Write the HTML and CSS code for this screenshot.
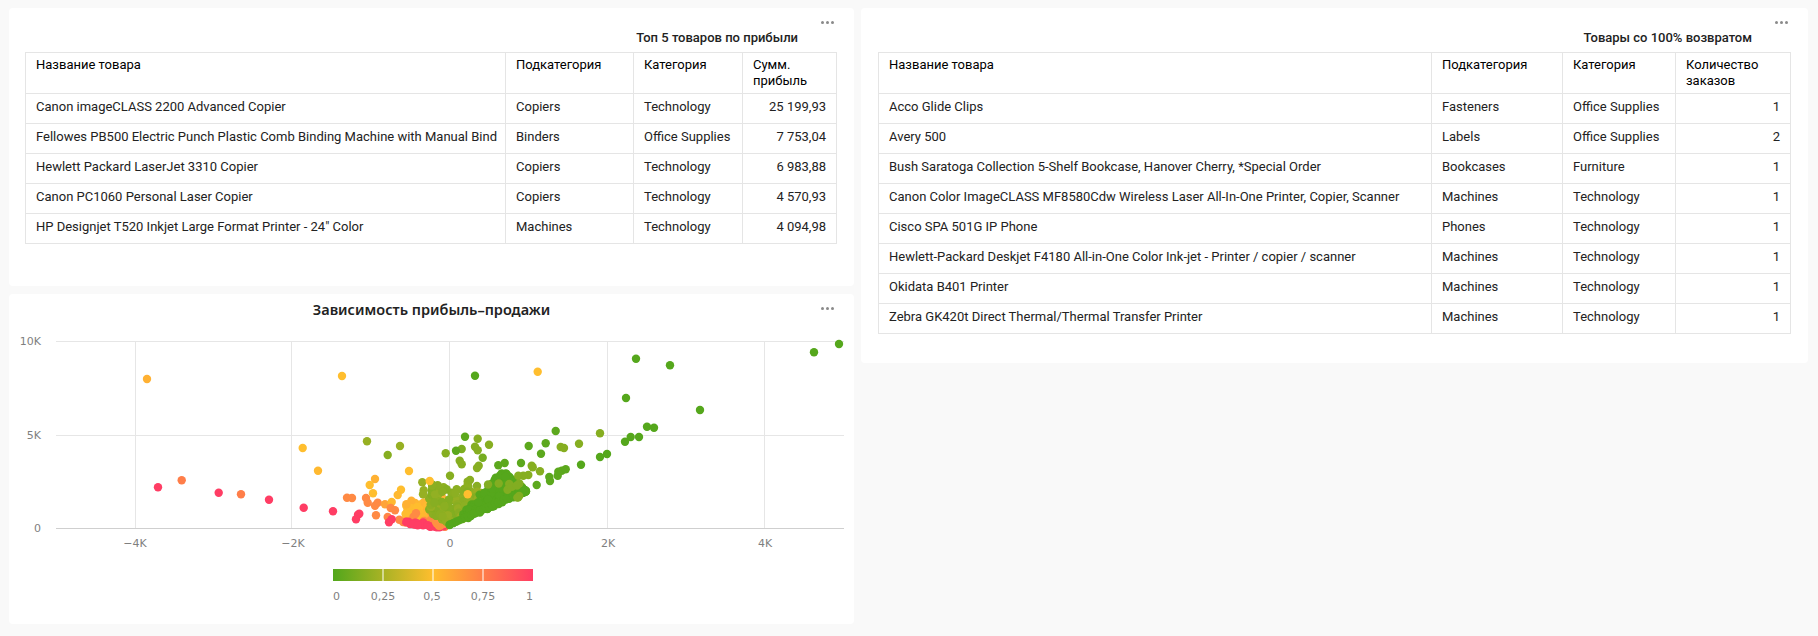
FILE: index.html
```html
<!DOCTYPE html>
<html lang="ru">
<head>
    <meta charset="UTF-8">
    <title>Dashboard</title>
    <link rel="stylesheet" href="styles.css">
</head>
<body>
    <main class="dashboard">
        <div class="column column-left">
            <section class="panel panel-top">
                <div class="menu"><i></i><i></i><i></i></div>
                <h2 class="table-title">Топ 5 товаров по прибыли</h2>
                <table class="data-table table-profit">
                    <colgroup><col class="c1"><col class="c2"><col class="c3"><col class="c4"></colgroup>
                    <thead>
                        <tr><th>Название товара</th><th>Подкатегория</th><th>Категория</th><th>Сумм. прибыль</th></tr>
                    </thead>
                    <tbody>
                        <tr><td>Canon imageCLASS 2200 Advanced Copier</td><td>Copiers</td><td>Technology</td><td class="num">25 199,93</td></tr>
                        <tr><td>Fellowes PB500 Electric Punch Plastic Comb Binding Machine with Manual Bind</td><td>Binders</td><td>Office Supplies</td><td class="num">7 753,04</td></tr>
                        <tr><td>Hewlett Packard LaserJet 3310 Copier</td><td>Copiers</td><td>Technology</td><td class="num">6 983,88</td></tr>
                        <tr><td>Canon PC1060 Personal Laser Copier</td><td>Copiers</td><td>Technology</td><td class="num">4 570,93</td></tr>
                        <tr><td>HP Designjet T520 Inkjet Large Format Printer - 24" Color</td><td>Machines</td><td>Technology</td><td class="num">4 094,98</td></tr>
                    </tbody>
                </table>
            </section>
            <section class="panel panel-chart">
                <div class="menu"><i></i><i></i><i></i></div>
                <h2 class="chart-title">Зависимость прибыль–продажи</h2>
                <svg id="scatter" class="scatter" width="845" height="299" viewBox="0 0 845 299"></svg>
            </section>
        </div>
        <div class="column column-right">
            <section class="panel panel-returns">
                <div class="menu"><i></i><i></i><i></i></div>
                <h2 class="table-title">Товары со 100% возвратом</h2>
                <table class="data-table table-returns">
                    <colgroup><col class="c1"><col class="c2"><col class="c3"><col class="c4"></colgroup>
                    <thead>
                        <tr><th>Название товара</th><th>Подкатегория</th><th>Категория</th><th>Количество заказов</th></tr>
                    </thead>
                    <tbody>
                        <tr><td>Acco Glide Clips</td><td>Fasteners</td><td>Office Supplies</td><td class="num">1</td></tr>
                        <tr><td>Avery 500</td><td>Labels</td><td>Office Supplies</td><td class="num">2</td></tr>
                        <tr><td>Bush Saratoga Collection 5-Shelf Bookcase, Hanover Cherry, *Special Order</td><td>Bookcases</td><td>Furniture</td><td class="num">1</td></tr>
                        <tr><td>Canon Color ImageCLASS MF8580Cdw Wireless Laser All-In-One Printer, Copier, Scanner</td><td>Machines</td><td>Technology</td><td class="num">1</td></tr>
                        <tr><td>Cisco SPA 501G IP Phone</td><td>Phones</td><td>Technology</td><td class="num">1</td></tr>
                        <tr><td>Hewlett-Packard Deskjet F4180 All-in-One Color Ink-jet - Printer / copier / scanner</td><td>Machines</td><td>Technology</td><td class="num">1</td></tr>
                        <tr><td>Okidata B401 Printer</td><td>Machines</td><td>Technology</td><td class="num">1</td></tr>
                        <tr><td>Zebra GK420t Direct Thermal/Thermal Transfer Printer</td><td>Machines</td><td>Technology</td><td class="num">1</td></tr>
                    </tbody>
                </table>
            </section>
        </div>
    </main>
    <script src="chart.js"></script>
</body>
</html>
```

FILE: styles.css
```css
body {
    margin: 0;
    background-color: #f9f9f9;
    color: #222;
    font-family: Roboto, "Noto Sans", Arial, sans-serif;
    font-size: 13px;
    overflow: hidden;
}

.dashboard {
    display: flex;
    align-items: flex-start;
    gap: 7px;
    padding: 8px 10px 0 9px;
}

.column {
    display: flex;
    flex-direction: column;
    gap: 8px;
}

.column-left {
    width: 845px;
}

.column-right {
    width: 947px;
}

.panel {
    position: relative;
    box-sizing: border-box;
    background-color: #fff;
    border-radius: 4px;
}

.panel-top {
    height: 278px;
    padding: 0 17px 0 16px;
}

.panel-chart {
    height: 330px;
}

.panel-returns {
    height: 355px;
    padding: 0 17px 0 17px;
}

.menu {
    position: absolute;
    top: 13px;
    right: 20px;
    display: flex;
    gap: 2px;
}

.menu i {
    width: 3px;
    height: 3px;
    border-radius: 50%;
    background-color: #8a8a8a;
}

.table-title {
    margin: 0;
    height: 44px;
    box-sizing: border-box;
    padding: 22px 39px 0 0;
    font-size: 13px;
    line-height: 16px;
    font-weight: 500;
    text-align: right;
}

.chart-title {
    margin: 0;
    height: 31px;
    box-sizing: border-box;
    padding-top: 6px;
    font-family: "Noto Sans", Arial, sans-serif;
    font-size: 14.5px;
    line-height: 18px;
    font-weight: 600;
    text-align: center;
}

.data-table {
    width: 100%;
    table-layout: fixed;
    border-collapse: collapse;
    line-height: 16px;
}

.data-table th,
.data-table td {
    border: 1px solid #e5e5e5;
    padding: 0 10px;
    vertical-align: middle;
    overflow: hidden;
}

.data-table th {
    height: 41px;
    padding-top: 4px;
    box-sizing: border-box;
    vertical-align: top;
    font-weight: 400;
    color: #000;
    text-align: left;
}

.data-table td {
    padding-bottom: 3px;
    height: 26px;
    white-space: nowrap;
}

.data-table .num {
    text-align: right;
}

.table-profit .c1 { width: 480px; }
.table-profit .c2 { width: 128px; }
.table-profit .c3 { width: 109px; }

.table-returns .c1 { width: 553px; }
.table-returns .c2 { width: 131px; }
.table-returns .c3 { width: 113px; }

.scatter {
    display: block;
}

.scatter text {
    font-family: "DejaVu Sans", Verdana, sans-serif;
    font-size: 11px;
    fill: #7f7f7f;
}
```

FILE: chart.js
```js
// points are written in page pixels, the svg starts at 9,325
const OFFSET_X = 9;
const OFFSET_Y = 325;
const SVG_NS = 'http://www.w3.org/2000/svg';
const svg = document.getElementById('scatter');

// value 0..1 -> legend colour
function ratioColor(r) {
    const stops = [[82, 167, 28], [255, 190, 46], [255, 61, 100]];
    const a = r < 0.5 ? stops[0] : stops[1];
    const b = r < 0.5 ? stops[1] : stops[2];
    const t = r < 0.5 ? r * 2 : (r - 0.5) * 2;
    const mix = a.map((v, i) => Math.round(v + (b[i] - v) * t));
    return 'rgb(' + mix.join(',') + ')';
}

function add(tag, attrs, text) {
    const el = document.createElementNS(SVG_NS, tag);
    for (const key in attrs) el.setAttribute(key, attrs[key]);
    if (text) el.textContent = text;
    svg.appendChild(el);
    return el;
}

function line(x1, y1, x2, y2, color) {
    add('line', {
        x1: x1 - OFFSET_X, y1: y1 - OFFSET_Y, x2: x2 - OFFSET_X, y2: y2 - OFFSET_Y,
        stroke: color, 'stroke-width': 1, 'shape-rendering': 'crispEdges'
    });
}

function label(x, y, text, anchor) {
    add('text', { x: x - OFFSET_X, y: y - OFFSET_Y, 'text-anchor': anchor }, text);
}

function dot(x, y, r) {
    add('circle', { cx: x - OFFSET_X, cy: y - OFFSET_Y, r: 4.2, fill: ratioColor(r) });
}

// grid
[341, 435].forEach(y => line(56, y, 844, y, '#e6e6e6'));
[135, 291, 449, 607, 764].forEach(x => line(x, 341, x, 528, '#e6e6e6'));
line(56, 528, 844, 528, '#cfcfcf');

[['10K', 345], ['5K', 439], ['0', 532]].forEach(t => label(41, t[1], t[0], 'end'));
[['−4K', 135], ['−2K', 293], ['0', 450], ['2K', 608], ['4K', 765]].forEach(t => label(t[1], 547, t[0], 'middle'));

// small seeded generator, the dense middle of the cloud does not need exact points
let seed = 20231;
function rnd() {
    seed = (seed * 16807) % 2147483647;
    return seed / 2147483647;
}
function between(a, b) {
    return a + (b - a) * rnd();
}

// orange and yellow left of zero
for (let i = 0; i < 30; i++) {
    const x = between(402, 447);
    dot(x, between(514, 527 - (449 - x) * 0.05), 0.72);
}
for (let i = 0; i < 90; i++) {
    dot(between(405, 446), 520 - 26 * rnd() * rnd(), between(0.5, 0.56));
}
for (let i = 0; i < 10; i++) {
    dot(between(408, 444), between(512, 521), 0.7);
}
// red runs along the bottom edge, a clump at 405-425 and a thin tail to zero
for (let i = 0; i < 14; i++) {
    const x = between(404, 424);
    dot(x, 526 - (449 - x) * 0.06 + between(-2, 1), 1);
}
for (let i = 0; i < 8; i++) {
    const x = between(424, 444);
    dot(x, 527 - (449 - x) * 0.04 + between(-1, 1), 1);
}
for (let i = 0; i < 8; i++) {
    const x = between(436, 448);
    dot(x, between(521, 526), 0.68);
}

// olive part, just around the axis
for (let i = 0; i < 150; i++) {
    const x = between(428, 482);
    const low = x > 449 ? 526 - (x - 449) * 0.47 : 524 - (449 - x) * 0.55;
    dot(x, low - (low - 478) * rnd() * Math.sqrt(rnd()) * 0.95, between(0.14, 0.2));
}
[[491, 497], [500, 476], [508, 480], [522, 487], [516, 480], [470, 480], [477, 468]].forEach(p => dot(p[0], p[1], 0.16));

// dark green wedge, top of it flat up to 505 and then closing on the lower edge
for (let i = 0; i < 290; i++) {
    const x = 462 + 64 * Math.sqrt(rnd());
    const low = 527 - (x - 449) * 0.46;
    const top = Math.max(low - (x - 449) * 0.6, 472 + Math.max(0, x - 505) * 0.9);
    dot(x, low - (low - top) * Math.pow(rnd(), 1.2), 0.01);
}
// the lower edge of the wedge is solid
for (let x = 450; x < 524; x += 3) {
    dot(x, 527 - (x - 449) * 0.46 - 2, 0.01);
}
for (let i = 0; i < 10; i++) {
    dot(between(486, 520), between(483, 498), 0.14);
}

// points that stand apart, read off the picture
const points = [
    [147, 379, .55], [158, 487.3, 1], [181.7, 480.3, .75], [218.7, 492.7, 1], [241, 494.3, .75],
    [269, 499.7, 1], [303.7, 507.7, 1], [333, 511.3, 1], [342, 376, .5], [302.7, 448, .5],
    [318, 470.7, .52], [367, 441.3, .2], [387.7, 455, .15], [400, 446, .2], [409, 471, .5],
    [375, 479, .55], [369.7, 485, .5], [373, 493.3, .5], [401, 489.7, .5], [397.7, 495, .52],
    [347, 497.7, .7], [352, 498, .7], [366, 498, .7], [367.7, 502.7, .7], [377.7, 502.7, .7],
    [375, 505.7, .7], [385, 504.3, .6], [391.7, 502, .52], [390.7, 508, .7], [395, 510.3, .7],
    [359.3, 513.7, 1], [358, 514.7, 1], [356, 519.3, 1], [376, 515.3, .7], [387.7, 517, .72],
    [399.3, 519.7, .7], [391.7, 519.3, 1], [389, 522.3, 1], [406.3, 522, 1], [413.3, 524.3, 1],
    [417.7, 525.3, 1], [422.3, 482.3, .2], [423.7, 490.3, .2], [423, 494.3, .2], [429.7, 481, .5],
    [475, 375.7, .01], [537.7, 371.7, .5], [636, 358.7, .01], [670, 365.3, .01], [626, 398, .01],
    [700, 410, .01], [814, 352.3, .01], [839, 344, .01], [647, 426.7, .01], [654, 427.7, .01],
    [630.7, 437, .01], [639, 437, .01], [625, 441.7, .01], [600, 433.3, .15], [607, 454, .01],
    [600, 457, .01], [581, 464.7, .01], [579, 443.7, .15], [555.7, 431, .03], [545.7, 443.3, .03],
    [560.7, 447, .15], [564, 448, .15], [528.7, 446, .03], [541, 453.7, .03], [489, 444.7, .15],
    [465, 436.7, .03], [477.7, 438.7, .15], [475, 446.7, .15], [477.7, 450.3, .15], [461.7, 449, .12],
    [456, 450.7, .03], [445.7, 453.3, .15], [482.7, 457.7, .1], [459.7, 460.7, .15], [461.7, 464.3, .15],
    [478.7, 465.7, .15], [498.3, 465.3, .03], [504.7, 463, .03], [521, 463, .03], [531.7, 465.7, .15],
    [532.7, 467.3, .15], [540, 471.3, .15], [528.3, 475, .15], [523.3, 475.7, .15], [518.3, 475.7, .15],
    [549.3, 477, .03], [550, 481, .03], [557.7, 475.7, .03], [558.3, 471.7, .03], [561.7, 470.7, .03],
    [565.7, 469.3, .03], [536.7, 485, .03], [450, 475.7, .15], [467.7, 494.3, .5], [449.5, 525, .01]
];
points.forEach(p => dot(p[0], p[1], p[2]));

// legend: one gradient cut by thin white ticks
const defs = add('defs', {});
const grad = document.createElementNS(SVG_NS, 'linearGradient');
grad.id = 'legend-gradient';
[[0, 0], [50, 0.5], [100, 1]].forEach(s => {
    const stop = document.createElementNS(SVG_NS, 'stop');
    stop.setAttribute('offset', s[0] + '%');
    stop.setAttribute('stop-color', ratioColor(s[1]));
    grad.appendChild(stop);
});
defs.appendChild(grad);
add('rect', { x: 333 - OFFSET_X, y: 569 - OFFSET_Y, width: 200, height: 12, fill: 'url(#legend-gradient)' });
[382.5, 432.5, 482.5].forEach(x => {
    add('rect', { x: x - OFFSET_X, y: 569 - OFFSET_Y, width: 1, height: 12, fill: '#fff' });
});
label(333, 600, '0', 'start');
label(383, 600, '0,25', 'middle');
label(432, 600, '0,5', 'middle');
label(483, 600, '0,75', 'middle');
label(533, 600, '1', 'end');
```
